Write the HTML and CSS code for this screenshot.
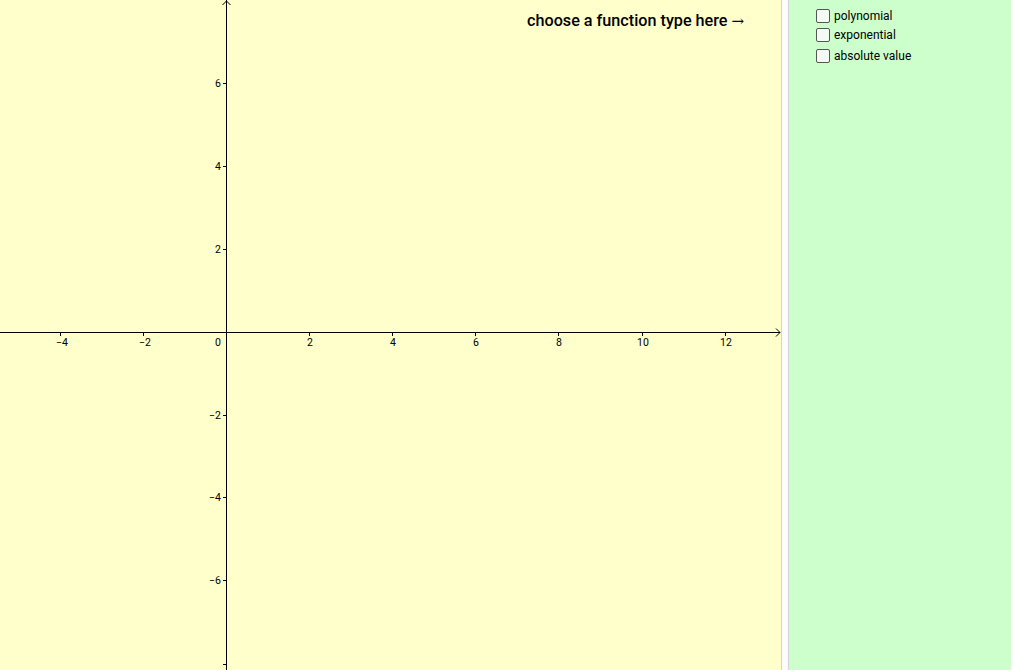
FILE: index.html
```html
<!DOCTYPE html>
<html>
<head>
<meta charset="utf-8">
<link rel="stylesheet" href="styles.css">
</head>
<body>
<div class="app">
  <div class="graphics">
    <svg class="plot" width="781" height="670" viewBox="0 0 781 670">
      <g class="axis" stroke="#000" stroke-width="1" fill="none" shape-rendering="crispEdges">
        <line x1="0" y1="332.5" x2="780" y2="332.5"/>
        <line x1="226.5" y1="0" x2="226.5" y2="670"/>
      </g>
      <g stroke="#000" stroke-width="1" fill="none">
        <polyline points="776,328.5 780,332.5 776,336.5"/>
        <polyline points="222.5,5 226.5,1 230.5,5"/>
      </g>
      <g stroke="#000" stroke-width="1" shape-rendering="crispEdges">
        <line x1="60.5" y1="332" x2="60.5" y2="336"/>
        <line x1="143.5" y1="332" x2="143.5" y2="336"/>
        <line x1="309.5" y1="332" x2="309.5" y2="336"/>
        <line x1="392.5" y1="332" x2="392.5" y2="336"/>
        <line x1="475.5" y1="332" x2="475.5" y2="336"/>
        <line x1="558.5" y1="332" x2="558.5" y2="336"/>
        <line x1="642.5" y1="332" x2="642.5" y2="336"/>
        <line x1="725.5" y1="332" x2="725.5" y2="336"/>
        <line x1="223" y1="83.5" x2="227" y2="83.5"/>
        <line x1="223" y1="166.5" x2="227" y2="166.5"/>
        <line x1="223" y1="249.5" x2="227" y2="249.5"/>
        <line x1="223" y1="415.5" x2="227" y2="415.5"/>
        <line x1="223" y1="497.5" x2="227" y2="497.5"/>
        <line x1="223" y1="580.5" x2="227" y2="580.5"/>
        <line x1="223" y1="664.5" x2="227" y2="664.5"/>
      </g>
      <g class="labels">
        <text x="62" y="346" text-anchor="middle">−4</text>
        <text x="145" y="346" text-anchor="middle">−2</text>
        <text x="221" y="346" text-anchor="end">0</text>
        <text x="310" y="346" text-anchor="middle">2</text>
        <text x="393" y="346" text-anchor="middle">4</text>
        <text x="476" y="346" text-anchor="middle">6</text>
        <text x="559" y="346" text-anchor="middle">8</text>
        <text x="643" y="346" text-anchor="middle">10</text>
        <text x="726" y="346" text-anchor="middle">12</text>
        <text x="221" y="87" text-anchor="end">6</text>
        <text x="221" y="170" text-anchor="end">4</text>
        <text x="221" y="253" text-anchor="end">2</text>
        <text x="221" y="419" text-anchor="end">−2</text>
        <text x="221" y="501" text-anchor="end">−4</text>
        <text x="221" y="584" text-anchor="end">−6</text>
      </g>
    </svg>
    <div class="title">choose a function type here <span class="arrow">→</span></div>
  </div>
  <div class="divider"></div>
  <div class="side">
    <label class="check"><span class="box"></span><span>polynomial</span></label>
    <label class="check"><span class="box"></span><span>exponential</span></label>
    <label class="check"><span class="box"></span><span>absolute value</span></label>
  </div>
  <div class="edge"></div>
</div>
</body>
</html>
```

FILE: styles.css
```css
html, body {
  margin: 0;
  padding: 0;
  background: #ffffff;
  overflow: hidden;
}

.app {
  display: flex;
  width: 1013px;
  height: 670px;
}

.graphics {
  position: relative;
  width: 781px;
  height: 670px;
  background: #ffffcc;
  flex: none;
}

.plot {
  display: block;
}

.labels text {
  font-family: Roboto, "Liberation Sans", sans-serif;
  font-size: 10.5px;
  fill: #000;
}

.title {
  position: absolute;
  left: 527px;
  top: 11px;
  font-family: Roboto, "Liberation Sans", sans-serif;
  font-weight: 500;
  font-size: 16.2px;
  line-height: 20px;
  color: #000;
  white-space: nowrap;
}

.arrow {
  font-family: "DejaVu Serif", serif;
  font-weight: 300;
  font-size: 15px;
}

.divider {
  flex: none;
  width: 6px;
  height: 670px;
  background: #fbfbfb;
  border-left: 1px solid #d4d4d4;
  border-right: 1px solid #d4d4d4;
}

.side {
  flex: none;
  width: 222px;
  height: 670px;
  background: #ccffcc;
  display: flex;
  flex-direction: column;
  padding: 8px 0 0 27px;
  box-sizing: border-box;
}

.check {
  display: flex;
  align-items: center;
  gap: 4px;
  font-family: Roboto, "Liberation Sans", sans-serif;
  font-size: 12px;
  color: #000;
  height: 16px;
}

.check + .check {
  margin-top: 3px;
}

.check:nth-child(3) {
  margin-top: 5px;
}

.box {
  width: 12px;
  height: 12px;
  border: 1px solid #555;
  border-radius: 2px;
  background: #f4fbf4;
  flex: none;
}

.edge {
  flex: none;
  width: 2px;
  height: 670px;
  background: #ffffff;
}
```
